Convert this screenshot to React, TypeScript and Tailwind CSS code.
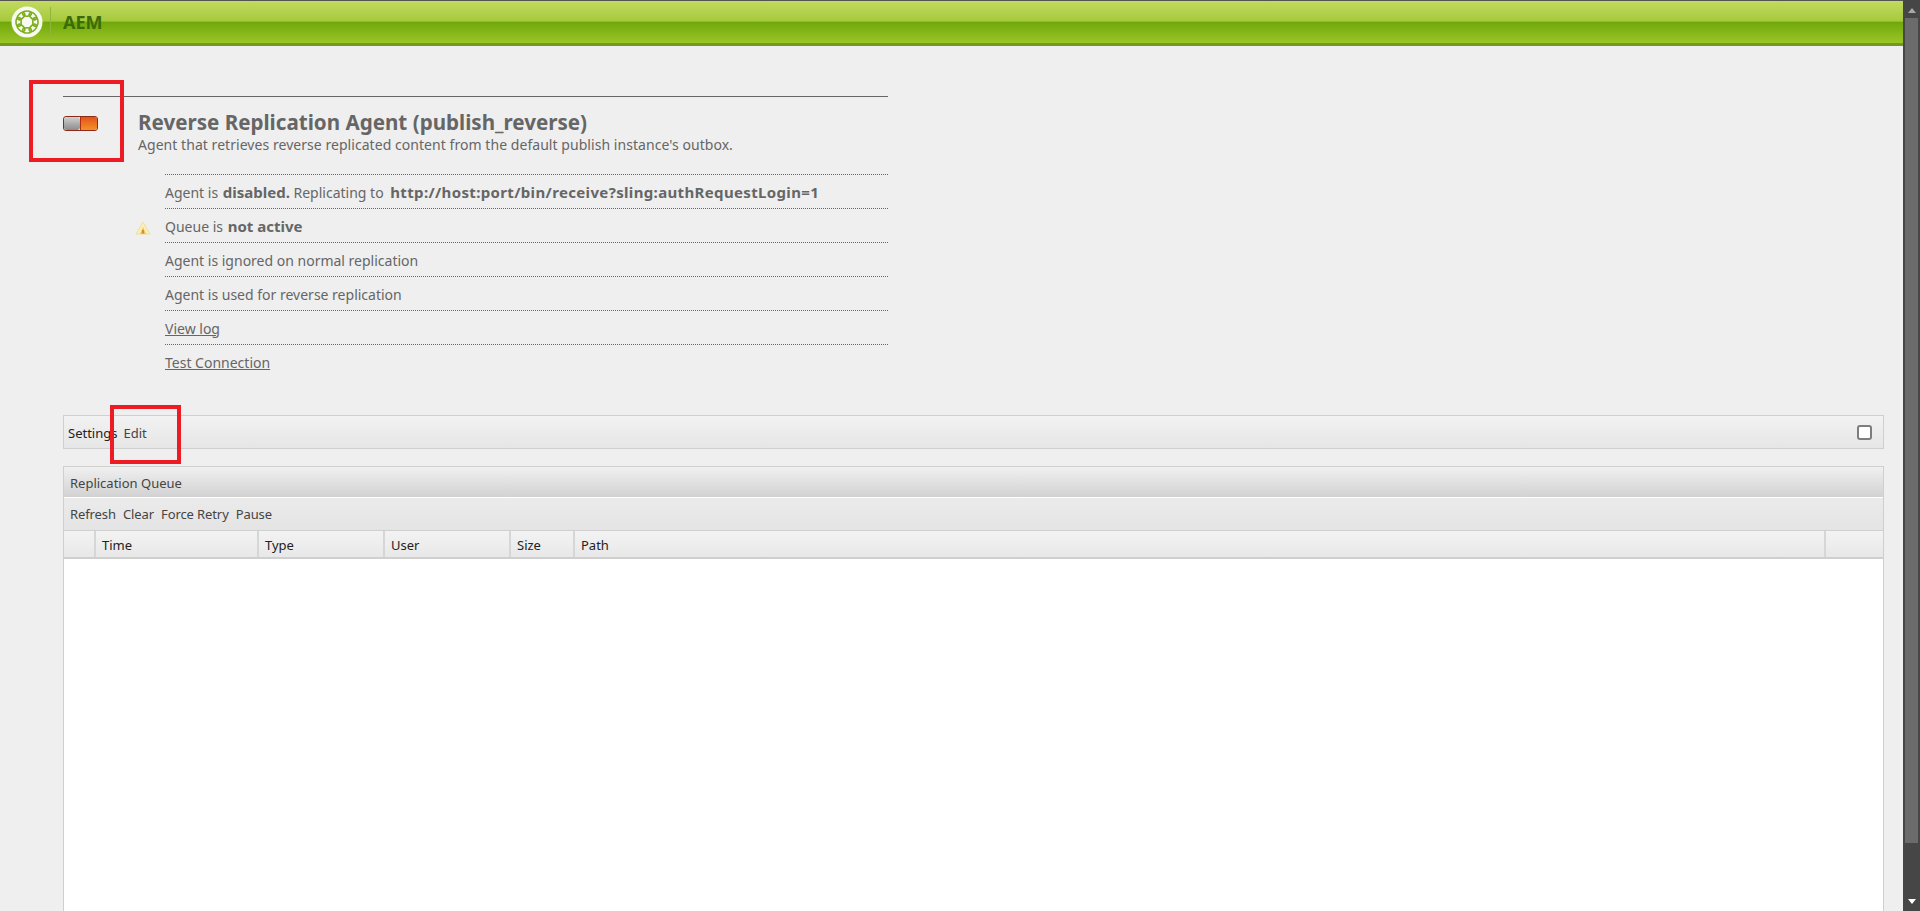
import { Fragment } from 'react';

const rows = [
  { id: 'status', warn: false },
  { id: 'queue', warn: true },
  { id: 'ignored', warn: false },
  { id: 'reverse', warn: false },
  { id: 'log', warn: false },
  { id: 'test', warn: false },
];

const columns = [
  { label: '', width: 'w-[32px]' },
  { label: 'Time', width: 'w-[163px]' },
  { label: 'Type', width: 'w-[126px]' },
  { label: 'User', width: 'w-[126px]' },
  { label: 'Size', width: 'w-[64px]' },
  { label: 'Path', width: 'w-[1251px]' },
  { label: '', width: 'flex-1' },
];

function Logo() {
  const beads = [0, 45, 90, 135, 180, 225, 270, 315];
  return (
    <svg width="32" height="32" viewBox="0 0 32 32" className="shrink-0">
      <circle cx="16" cy="16" r="15.5" fill="#f7faf0" />
      {beads.map((a) => (
        <ellipse
          key={a}
          cx="16"
          cy="7.6"
          rx="4.4"
          ry="2.6"
          fill="none"
          stroke="#7dae1c"
          strokeWidth="1.6"
          transform={`rotate(${a} 16 16)`}
        />
      ))}
    </svg>
  );
}

function Toggle() {
  return (
    <div className="flex h-[15px] w-[35px] overflow-hidden rounded-[3px] border border-[#8a2a1a]">
      <div className="w-[16px] rounded-[3px] bg-gradient-to-b from-[#d0d0d0] to-[#8c8c8c]" />
      <div className="flex-1 border-l border-[#b02c10] bg-gradient-to-b from-[#e0541a] to-[#f59028]" />
    </div>
  );
}

function WarningIcon() {
  return (
    <svg width="16" height="14" viewBox="0 0 16 14">
      <path d="M8 1 L15 13 H1 Z" fill="#fbeec4" stroke="#f6dc94" strokeWidth="1" />
      <path d="M8 6 L11 13 H5 Z" fill="#f2c44e" />
      <rect x="7.2" y="9" width="1.6" height="3.5" fill="#c08a1c" />
    </svg>
  );
}

function RowText({ id }: { id: string }) {
  if (id === 'status') {
    return (
      <Fragment>
        Agent is <b className="ml-px text-[15px]">disabled.</b> Replicating to{' '}
        <b className="ml-[3px] text-[15px] tracking-[0.35px]">http://host:port/bin/receive?sling:authRequestLogin=1</b>
      </Fragment>
    );
  }
  if (id === 'queue') {
    return (
      <Fragment>
        Queue is <b className="ml-px text-[15px]">not active</b>
      </Fragment>
    );
  }
  if (id === 'ignored') return <Fragment>Agent is ignored on normal replication</Fragment>;
  if (id === 'reverse') return <Fragment>Agent is used for reverse replication</Fragment>;
  if (id === 'log') return <a className="underline">View log</a>;
  return <a className="underline">Test Connection</a>;
}

export default function App() {
  return (
    <div className="relative flex h-[911px] overflow-hidden bg-[#efefef] font-['Noto_Sans',sans-serif] text-[13px] text-[#666]">
      <div className="flex min-w-0 flex-1 flex-col">
        <header className="flex h-[46px] shrink-0 items-center border-t border-[#555] border-b-[3px] border-b-[#6f9a1e] bg-[linear-gradient(#c2da60_0%,#a6c93c_48%,#6fa80a_50%,#9cc528_100%)]">
          <div className="ml-[11px]">
            <Logo />
          </div>
          <div className="ml-[7px] h-[30px] w-px bg-[#8fb53a]" />
          <span className="ml-[12px] text-[18px] font-bold text-[#3c6b08]">AEM</span>
        </header>

        <main className="flex min-h-0 flex-1 flex-col px-[63px] pr-[19px] pt-[50px]">
          <section className="w-[825px] border-t border-[#666]">
            <div className="flex h-[77px]">
              <div className="w-[75px] pt-[19px]">
                <Toggle />
              </div>
              <div className="pt-[11px]">
                <h1 className="text-[20.6px] font-bold leading-[29px] text-[#666]">Reverse Replication Agent (publish_reverse)</h1>
                <p className="text-[14px] leading-[16px] tracking-[0.05px]">Agent that retrieves reverse replicated content from the default publish instance's outbox.</p>
              </div>
            </div>
            <ul className="ml-[102px] text-[14px]">
              {rows.map((row, i) => (
                <li
                  key={row.id}
                  className={`relative flex h-[34px] items-center border-t border-dotted border-[#666] leading-none ${i < 2 ? 'pt-[1px]' : 'pt-[2px]'}`}
                >
                  {row.warn && (
                    <span className="absolute left-[-30px] top-[12px]">
                      <WarningIcon />
                    </span>
                  )}
                  <span>
                    <RowText id={row.id} />
                  </span>
                </li>
              ))}
            </ul>
          </section>

          <div className="mt-[37px] flex h-[34px] shrink-0 items-center border border-[#cfcfcf] bg-gradient-to-b from-[#f2f2f2] to-[#e6e6e6] pl-[4px] pr-[11px]">
            <span className="pt-[3px] text-[#222]">Settings</span>
            <span className="ml-[6px] pt-[3px] text-[#444]">Edit</span>
            <span className="ml-auto h-[15px] w-[15px] rounded-[3px] border-2 border-[#7d7d7d] bg-white" />
          </div>

          <section className="mt-[17px] flex min-h-0 flex-1 flex-col border-x border-t border-[#cfcfcf]">
            <div className="flex h-[30px] shrink-0 items-center bg-gradient-to-b from-[#f0f0f0] to-[#d2d2d2] pl-[6px] pt-[3px] text-[#444]">
              Replication Queue
            </div>
            <div className="flex h-[33px] shrink-0 items-center gap-[7px] border-t border-white bg-gradient-to-b from-[#ebebeb] to-[#e4e4e4] pl-[6px] pt-[1px] tracking-[-0.1px] text-[#444]">
              <span>Refresh</span>
              <span>Clear</span>
              <span>Force Retry</span>
              <span>Pause</span>
            </div>
            <div className="flex h-[29px] shrink-0 border-y border-y-[#cfcfcf] border-b-2 bg-gradient-to-b from-[#f3f3f3] to-[#e8e8e8] text-[#222]">
              {columns.map((col, i) => (
                <div
                  key={i}
                  className={`${col.width} flex items-center border-r-2 border-[#d6d6d6] pl-[6px] pt-[4px] last:border-r-0`}
                >
                  {col.label}
                </div>
              ))}
            </div>
            <div className="flex-1 bg-white" />
          </section>
        </main>
      </div>

      <aside className="flex w-[17px] shrink-0 flex-col items-center bg-[#464646]">
        <div className="mt-[8px] h-0 w-0 border-x-[4px] border-b-[5px] border-x-transparent border-b-[#a8a8a8]" />
        <div className="mt-[5px] h-[825px] w-[13px] bg-[#6b6b6b]" />
        <div className="mt-[56px] h-0 w-0 border-x-[4px] border-t-[5px] border-x-transparent border-t-white" />
      </aside>

      {/* annotation boxes drawn over the screenshot */}
      <div className="absolute left-[29px] top-[80px] h-[82px] w-[95px] border-[4px] border-[#ed1c24]" />
      <div className="absolute left-[110px] top-[405px] h-[59px] w-[71px] border-[4px] border-[#ed1c24]" />
    </div>
  );
}
